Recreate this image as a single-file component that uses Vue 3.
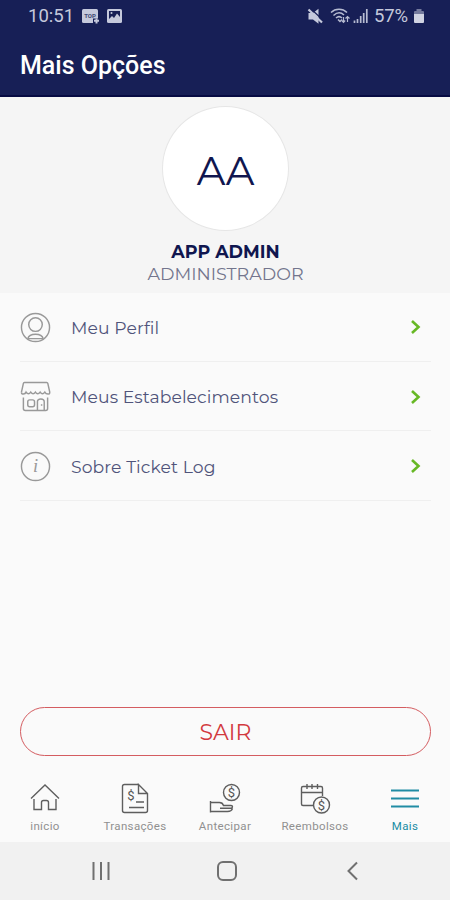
<template>
  <div class="screen">
    <header class="header">
      <!-- Phone status bar -->
      <div class="status">
        <span class="clock">10:51</span>
        <svg class="card-icon" width="19" height="16" viewBox="0 0 19 16">
          <rect x="1" y="1" width="16" height="14" rx="1.5" fill="#c5c9dc" />
          <text x="9" y="9.5" class="card-text">TOP</text>
          <path d="M12 10.500h6V16h-6z" fill="#171f56" />
          <path d="M13 12.800h5M15.500 10.500v5" stroke="#c5c9dc" stroke-width="2" />
        </svg>
        <svg class="image-icon" width="16" height="16" viewBox="0 0 16 16">
          <rect x="1" y="1" width="15" height="14" rx="1.5" fill="#c5c9dc" />
          <path d="M3 11V3h11v6l-3-3.500-3 4.500-2-2z" fill="#171f56" />
          <circle cx="5.500" cy="5" r="1" fill="#c5c9dc" />
        </svg>
        <span class="spacer"></span>
        <svg class="mute-icon" width="17" height="17" viewBox="0 0 17 17">
          <path d="M1.500 5h4.500L11.500 .8v15L6 11.500H1.500z" fill="#c5c9dc" />
          <path d="M3.500 .5l13 12" stroke="#171f56" stroke-width="1.200" />
          <path d="M1.500 1.500l13.500 13" stroke="#c5c9dc" stroke-width="2.200" />
        </svg>
        <svg class="wifi-icon" width="20" height="16" viewBox="0 0 20 16" fill="none" stroke="#b6bbd1" stroke-width="1.500">
          <path d="M1 4.500C5.500 .2 12.500 .2 17 4.500M3.500 7.500C7 4.200 11 4.200 14 7M6 10c2-1.800 4-1.800 6 0" />
          <path d="M8 11.500l2 2 2-2" />
          <path d="M13.500 9v5M11.800 12.500l1.700 1.800 1.700-1.800M17.500 14V8.500M15.500 10.500l2-2 2 2" stroke-width="1.200" />
        </svg>
        <svg class="signal-icon" width="15" height="16" viewBox="0 0 15 16" stroke="#b6bbd1" stroke-width="1.700">
          <path d="M1.500 15v-2.500M4.500 15v-4M7.700 15V8M10.700 15V5M13.800 15V1" />
        </svg>
        <span class="percent">57%</span>
        <svg class="battery-icon" width="12" height="16" viewBox="0 0 12 16">
          <path d="M3.500 1h5v2H10q1 0 1 1v3H1V4q0-1 1-1h1.500z" fill="#747a9d" />
          <path d="M1 6h10v8q0 1-1 1H2q-1 0-1-1z" fill="#d0d3e2" />
        </svg>
      </div>
      <h1 class="title">Mais Opções</h1>
    </header>

    <section class="profile">
      <div class="avatar"><span>AA</span></div>
      <div class="name">APP ADMIN</div>
      <div class="role">ADMINISTRADOR</div>
    </section>

    <ul class="menu">
      <li v-for="item in items" :key="item.id" class="menu-item">
        <svg class="menu-icon" width="31" height="31" viewBox="0 0 32 32">
          <template v-if="item.id === 'perfil'">
            <circle cx="16" cy="16" r="14.500" />
            <circle cx="16" cy="13" r="7" />
            <path d="M8 27.500C9 24 12 23 16 23s7 1 8 4.500M8 27.500h16" />
          </template>
          <template v-else-if="item.id === 'lojas'">
            <path d="M1.500 11.500l2-9q.2-1 1-1h23q1 0 1.200 1l2 9q0 2-1.700 2" />
            <path d="M1.500 11.500q0 2 2 2 2 0 2.800-2 2.400 3.500 4.800 0 2.400 3.500 4.800 0 2.400 3.500 4.900 0 2.400 3.500 4.800 0 1 2 3.400 2" />
            <path d="M3.500 17v11.500q0 2 2 2h21q2 0 2-2V17" />
            <rect x="8" y="19.500" width="7" height="7" rx="2" />
            <path d="M18 30v-8.500q0-3 3.500-3t3.500 3V30M22.300 24v1.500" />
          </template>
          <template v-else>
            <circle cx="16" cy="16" r="14.500" />
            <text x="16" y="22" class="info-text">i</text>
          </template>
        </svg>
        <span class="menu-label">{{ item.label }}</span>
        <svg class="chevron" width="12" height="16" viewBox="0 0 12 16">
          <path d="M2 2l6.500 6L2 14" />
        </svg>
      </li>
    </ul>

    <button class="logout" @click="logout">SAIR</button>

    <nav class="tabs">
      <button
        v-for="tab in tabs"
        :key="tab.id"
        class="tab"
        :class="{ active: tab.id === current }"
        @click="current = tab.id"
      >
        <svg class="tab-icon" width="32" height="32" viewBox="0 0 32 32">
          <path v-if="tab.id === 'inicio'" d="M2 15.500L16 2l14 13.500M5 16v10.500h7.500v-7q0-2 2-2h3q2 0 2 2v7H27V16" />
          <template v-else-if="tab.id === 'transacoes'">
            <path d="M19.500 1.500H5.500q-2 0-2 2v24q0 2 2 2h21q2 0 2-2V10.500l-9-9v9h9" />
            <path d="M17 19h8M10 24.500h15" />
            <text x="12" y="17" class="money">$</text>
          </template>
          <template v-else-if="tab.id === 'antecipar'">
            <circle cx="22.500" cy="9.500" r="8" />
            <text x="22.500" y="14" class="money">$</text>
            <path d="M1.500 18v11.500M1.500 19.500h9q3 0 4 3h7.500q1.500 0 1.500 1.300T22 25.200h-11M1.500 28.500h17q4 0 5-3" />
          </template>
          <template v-else-if="tab.id === 'reembolsos'">
            <path d="M14 22.500H4q-1.500 0-1.500-1.500V5Q2.500 3.500 4 3.500h18q1.500 0 1.500 1.500v8M2.500 9.500h21M8 1v5M13 1v5M18.500 1v5" />
            <circle cx="22.500" cy="22" r="8" />
            <text x="22.500" y="26.500" class="money">$</text>
          </template>
          <path v-else d="M2 7.500h28M2 15.500h28M2 23.500h28" />
        </svg>
        <span class="tab-label">{{ tab.label }}</span>
      </button>
    </nav>

    <!-- Android navigation keys -->
    <footer class="keys">
      <svg width="22" height="22" viewBox="0 0 22 22"><path d="M3.500 2v18M11 2v18M18.500 2v18" /></svg>
      <svg width="22" height="22" viewBox="0 0 22 22"><rect x="2" y="2" width="18" height="18" rx="5" /></svg>
      <svg width="22" height="22" viewBox="0 0 22 22"><path d="M15 2.500L6.500 11l8.500 8.500" /></svg>
    </footer>
  </div>
</template>

<script setup>
import { ref } from 'vue'

const items = [
  { id: 'perfil', label: 'Meu Perfil' },
  { id: 'lojas', label: 'Meus Estabelecimentos' },
  { id: 'sobre', label: 'Sobre Ticket Log' },
]

const tabs = [
  { id: 'inicio', label: 'início' },
  { id: 'transacoes', label: 'Transações' },
  { id: 'antecipar', label: 'Antecipar' },
  { id: 'reembolsos', label: 'Reembolsos' },
  { id: 'mais', label: 'Mais' },
]

const current = ref('mais')

function logout() {
  current.value = 'inicio'
}
</script>

<style>
body { margin: 0; background: #fafafa; }
</style>

<style scoped>
* { box-sizing: border-box; }

.screen {
  display: flex;
  flex-direction: column;
  width: 450px;
  height: 900px;
  overflow: hidden;
  background: #fafafa;
  color: #50547a;
  font-family: Montserrat, Inter, sans-serif;
}

svg { flex: none; }

.header {
  height: 97px;
  flex: none;
  background: #171f56;
  border-bottom: 2px solid #070b43;
  font-family: Roboto, sans-serif;
}

.status {
  display: flex;
  align-items: center;
  height: 32px;
  padding: 0 25px 0 28px;
  color: #c5c9dc;
  font-size: 18.5px;
}
.clock { width: 53px; }
.card-icon { margin-right: 6px; }
.card-text { fill: #404873; font-size: 6px; font-weight: 700; text-anchor: middle; }
.spacer { flex: 1; }
.mute-icon { margin-right: 6px; }
.wifi-icon { margin-right: 3px; }
.signal-icon { margin-right: 6px; }
.percent { width: 39px; letter-spacing: -0.2px; }

.title {
  margin: 0;
  padding: 18px 0 0 20px;
  color: #fff;
  font-size: 25px;
  font-weight: 500;
  line-height: 32px;
}

.profile {
  display: flex;
  flex-direction: column;
  align-items: center;
  flex: none;
  height: 196px;
  padding-top: 9px;
  background: #f5f5f5;
}

.avatar {
  display: flex;
  align-items: center;
  justify-content: center;
  width: 127px;
  height: 125px;
  padding: 3px 0 0 1px;
  border: 1.5px solid #e6e6e6;
  border-radius: 50%;
  background: #fff;
  color: #10164f;
  font-size: 40px;
}

.name {
  margin-top: 10px;
  padding-left: 1px;
  color: #10164f;
  font-size: 17.5px;
  font-weight: 700;
  line-height: 22px;
}
.role { padding-left: 1px; color: #73758d; font-size: 17.5px; line-height: 22px; }

.menu { flex: none; margin: 0; padding: 0 19px 0 20px; list-style: none; }

.menu-item {
  display: flex;
  align-items: center;
  height: 69px;
  border-bottom: 1px solid #efefef;
}
.menu-item + .menu-item { padding-top: 1px; }
.menu-item:last-child { height: 70px; }

.menu-icon { fill: none; stroke: #999; stroke-width: 1.5; margin-right: 20px; }
.info-text {
  fill: #999;
  stroke: none;
  font-family: "Liberation Serif", serif;
  font-size: 19px;
  font-style: italic;
  text-anchor: middle;
}
.menu-label { flex: 1; font-size: 17.2px; letter-spacing: 0.1px; }
.chevron { margin-right: 9px; fill: none; stroke: #67b825; stroke-width: 2.6; }

.logout {
  flex: none;
  height: 49px;
  margin: auto 19px 19px 20px;
  padding: 2px 0 0;
  border: 1.5px solid #d45c60;
  border-radius: 25px;
  background: transparent;
  color: #d2393e;
  font-family: inherit;
  font-size: 22px;
  font-weight: 400;
}

.tabs { display: flex; flex: none; height: 67px; }

.tab {
  display: flex;
  flex: 1;
  flex-direction: column;
  align-items: center;
  width: 90px;
  padding: 8px 0 0;
  border: none;
  background: transparent;
  color: #909090;
  font-family: Roboto, sans-serif;
  font-weight: 400;
}
.tab-icon { fill: none; stroke: #5e5e5e; stroke-width: 1.4; }
.money { fill: #555; stroke: none; font-size: 13px; text-anchor: middle; }
.tab-label { font-size: 11.5px; line-height: 14px; margin-top: 4px; letter-spacing: 0.35px; }
.tab.active { color: #208ca4; }
.tab.active .tab-icon { stroke: #208ca4; stroke-width: 2; }

.keys {
  display: flex;
  flex: none;
  align-items: center;
  justify-content: space-between;
  height: 58px;
  padding: 0 86px 0 90px;
  background: #f1f1f1;
}
.keys svg { fill: none; stroke: #707070; stroke-width: 2; }
</style>
